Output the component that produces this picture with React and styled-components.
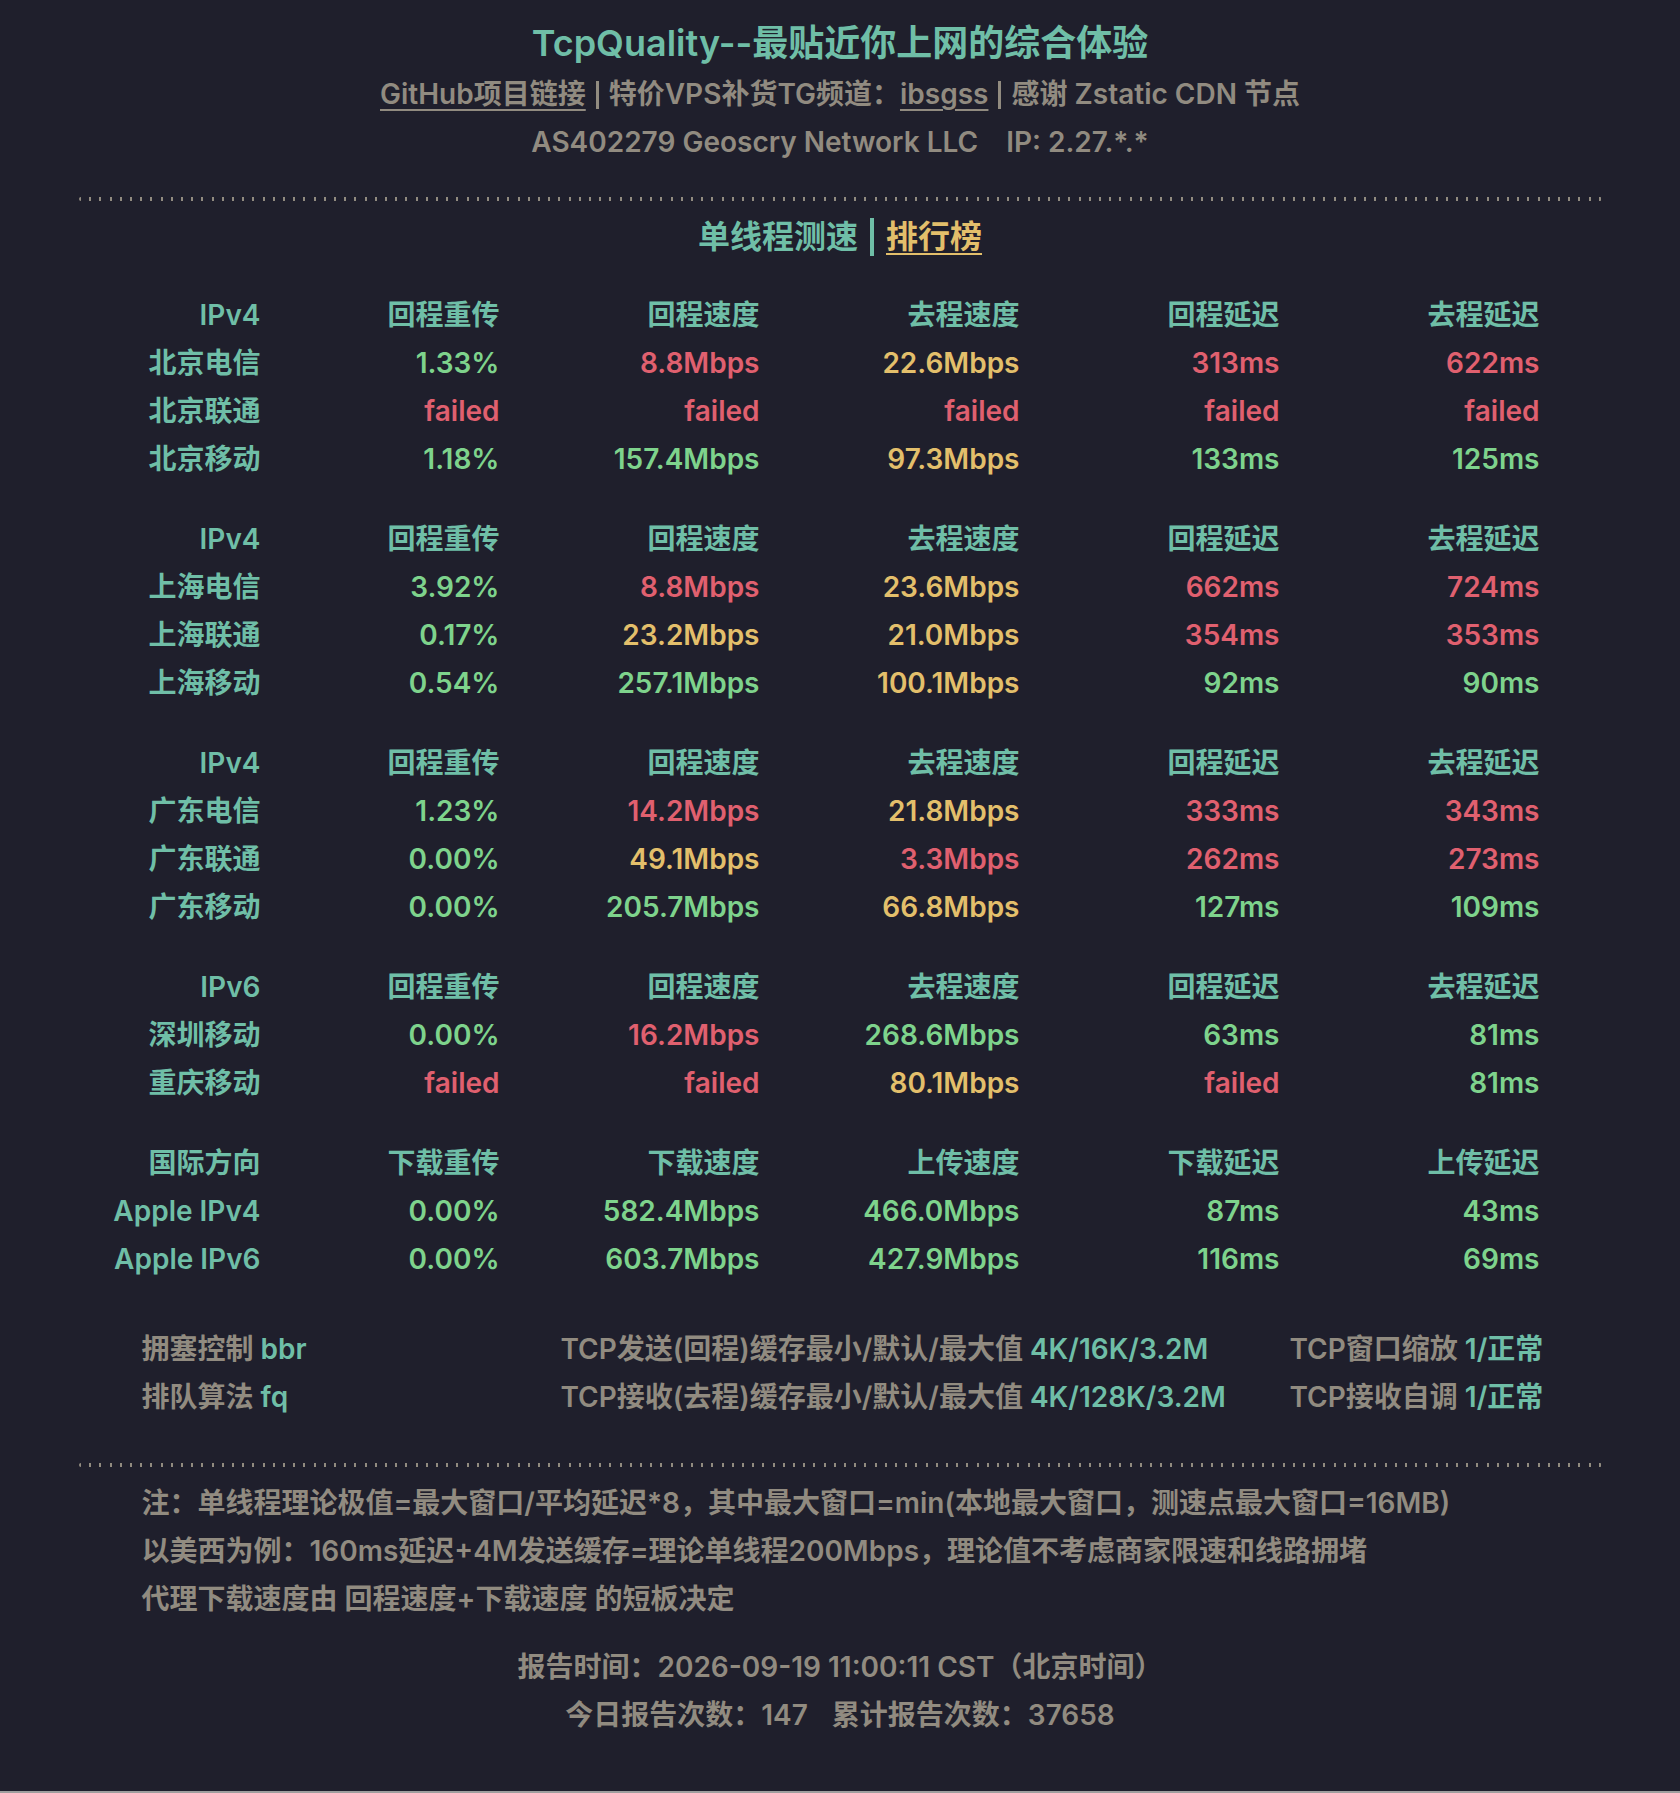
import React from 'react';
import styled, { createGlobalStyle } from 'styled-components';

const C = {
  bg: '#1f1f2c',
  teal: '#6fbea7',
  gray: '#918b80',
  g: '#7ed38c',
  r: '#e0606f',
  y: '#e3bf6b',
};

const GlobalStyle = createGlobalStyle`
  html { background: #9e9e9e; }
  body {
    margin: 0;
    background: ${C.bg};
    font-family: Inter, "Noto Sans CJK SC", sans-serif;
    font-weight: 600;
  }
`;

const Page = styled.div`
  box-sizing: border-box;
  height: 1791px;
  padding-top: 16px;
  background: ${C.bg};
`;

const Inner = styled.div`
  width: 1523px;
  margin: 0 auto;
`;

const Title = styled.h1`
  margin: 0;
  font-size: 36px;
  line-height: 54px;
  font-weight: 600;
  color: ${C.teal};
  text-align: center;
`;

const InfoLine = styled.div`
  font-size: 28px;
  line-height: 48px;
  color: ${C.gray};
  text-align: center;
`;

const Link = styled.a`
  color: ${(p) => p.$color || C.gray};
  text-decoration: underline;
  text-underline-offset: 5px;
  text-decoration-thickness: 2px;
`;

const Bar = styled.span`
  display: inline-block;
  width: ${(p) => p.$w || 3}px;
  height: ${(p) => p.$h || 28}px;
  margin: 0 ${(p) => p.$gap || 10}px;
  vertical-align: ${(p) => p.$v || -5}px;
  background: ${(p) => p.$color || C.gray};
`;

const Gap = styled.span`
  display: inline-block;
  width: ${(p) => p.$w}px;
`;

const Dots = styled.div`
  height: 4px;
  margin: ${(p) => p.$m};
  border-radius: 2px;
  background: repeating-linear-gradient(90deg, ${C.gray} 0 2px, transparent 2px 10.2px);
`;

const Section = styled.div`
  font-size: 32px;
  line-height: 48px;
  color: ${C.teal};
  text-align: center;
  margin-top: 12px;
`;

const Table = styled.div`
  display: grid;
  grid-template-columns: 182px 239px repeat(4, 260px);
  margin-top: 30px;
  font-size: 28px;
  line-height: 48px;
`;

const Cell = styled.div`
  text-align: right;
  white-space: nowrap;
  color: ${(p) => p.$color};
  margin-top: ${(p) => (p.$first ? 32 : 0)}px;
`;

const Settings = styled.div`
  display: grid;
  grid-template-columns: 419px 729px auto;
  padding-left: 63px;
  margin-top: 42px;
  font-size: 28px;
  line-height: 48px;
  color: ${C.gray};
  white-space: nowrap;
`;

const Val = styled.span`
  color: ${C.teal};
`;

const Notes = styled.div`
  padding-left: 63px;
  margin-top: 12px;
  font-size: 28px;
  line-height: 48px;
  color: ${C.gray};
`;

const Footer = styled(InfoLine)`
  margin-top: 20px;
`;

const HEAD_A = ['回程重传', '回程速度', '去程速度', '回程延迟', '去程延迟'];
const HEAD_B = ['下载重传', '下载速度', '上传速度', '下载延迟', '上传延迟'];
const F = ['failed', 'r'];

const blocks = [
  {
    head: ['IPv4', ...HEAD_A],
    rows: [
      ['北京电信', ['1.33%', 'g'], ['8.8Mbps', 'r'], ['22.6Mbps', 'y'], ['313ms', 'r'], ['622ms', 'r']],
      ['北京联通', F, F, F, F, F],
      ['北京移动', ['1.18%', 'g'], ['157.4Mbps', 'g'], ['97.3Mbps', 'y'], ['133ms', 'g'], ['125ms', 'g']],
    ],
  },
  {
    head: ['IPv4', ...HEAD_A],
    rows: [
      ['上海电信', ['3.92%', 'g'], ['8.8Mbps', 'r'], ['23.6Mbps', 'y'], ['662ms', 'r'], ['724ms', 'r']],
      ['上海联通', ['0.17%', 'g'], ['23.2Mbps', 'y'], ['21.0Mbps', 'y'], ['354ms', 'r'], ['353ms', 'r']],
      ['上海移动', ['0.54%', 'g'], ['257.1Mbps', 'g'], ['100.1Mbps', 'y'], ['92ms', 'g'], ['90ms', 'g']],
    ],
  },
  {
    head: ['IPv4', ...HEAD_A],
    rows: [
      ['广东电信', ['1.23%', 'g'], ['14.2Mbps', 'r'], ['21.8Mbps', 'y'], ['333ms', 'r'], ['343ms', 'r']],
      ['广东联通', ['0.00%', 'g'], ['49.1Mbps', 'y'], ['3.3Mbps', 'r'], ['262ms', 'r'], ['273ms', 'r']],
      ['广东移动', ['0.00%', 'g'], ['205.7Mbps', 'g'], ['66.8Mbps', 'y'], ['127ms', 'g'], ['109ms', 'g']],
    ],
  },
  {
    head: ['IPv6', ...HEAD_A],
    rows: [
      ['深圳移动', ['0.00%', 'g'], ['16.2Mbps', 'r'], ['268.6Mbps', 'g'], ['63ms', 'g'], ['81ms', 'g']],
      ['重庆移动', F, F, ['80.1Mbps', 'y'], F, ['81ms', 'g']],
    ],
  },
  {
    head: ['国际方向', ...HEAD_B],
    rows: [
      ['Apple IPv4', ['0.00%', 'g'], ['582.4Mbps', 'g'], ['466.0Mbps', 'g'], ['87ms', 'g'], ['43ms', 'g']],
      ['Apple IPv6', ['0.00%', 'g'], ['603.7Mbps', 'g'], ['427.9Mbps', 'g'], ['116ms', 'g'], ['69ms', 'g']],
    ],
  },
];

const App = () => (
  <Page>
    <GlobalStyle />
    <Inner>
      <Title>TcpQuality--最贴近你上网的综合体验</Title>
      <InfoLine>
        <Link>GitHub项目链接</Link>
        <Bar />
        特价VPS补货TG频道：<Link>ibsgss</Link>
        <Bar />
        感谢 Zstatic CDN 节点
      </InfoLine>
      <InfoLine>
        AS402279 Geoscry Network LLC<Gap $w={28} />IP: 2.27.*.*
      </InfoLine>
      <Dots $m="31px 0 0" />
      <Section>
        单线程测速
        <Bar $color={C.teal} $w={4} $h={38} $v={-8} $gap={12} />
        <Link $color={C.y}>排行榜</Link>
      </Section>
      <Table>
        {blocks.map((b, bi) => (
          <React.Fragment key={bi}>
            {b.head.map((h, i) => (
              <Cell key={'h' + i} $color={C.teal} $first={bi > 0}>
                {h}
              </Cell>
            ))}
            {b.rows.map((row, ri) =>
              row.map((c, ci) =>
                ci === 0 ? (
                  <Cell key={ri + '-' + ci} $color={C.teal}>{c}</Cell>
                ) : (
                  <Cell key={ri + '-' + ci} $color={C[c[1]]}>{c[0]}</Cell>
                )
              )
            )}
          </React.Fragment>
        ))}
      </Table>
      <Settings>
        <div>拥塞控制 <Val>bbr</Val></div>
        <div>TCP发送(回程)缓存最小/默认/最大值 <Val>4K/16K/3.2M</Val></div>
        <div>TCP窗口缩放 <Val>1/正常</Val></div>
        <div>排队算法 <Val>fq</Val></div>
        <div>TCP接收(去程)缓存最小/默认/最大值 <Val>4K/128K/3.2M</Val></div>
        <div>TCP接收自调 <Val>1/正常</Val></div>
      </Settings>
      <Dots $m="42px 0 0" />
      <Notes>
        <div>注：单线程理论极值=最大窗口/平均延迟*8，其中最大窗口=min(本地最大窗口，测速点最大窗口=16MB)</div>
        <div>以美西为例：160ms延迟+4M发送缓存=理论单线程200Mbps，理论值不考虑商家限速和线路拥堵</div>
        <div>代理下载速度由 回程速度+下载速度 的短板决定</div>
      </Notes>
      <Footer>报告时间：2026-09-19 11:00:11 CST（北京时间）</Footer>
      <InfoLine>
        今日报告次数：147<Gap $w={24} />累计报告次数：37658
      </InfoLine>
    </Inner>
  </Page>
);

export default App;
